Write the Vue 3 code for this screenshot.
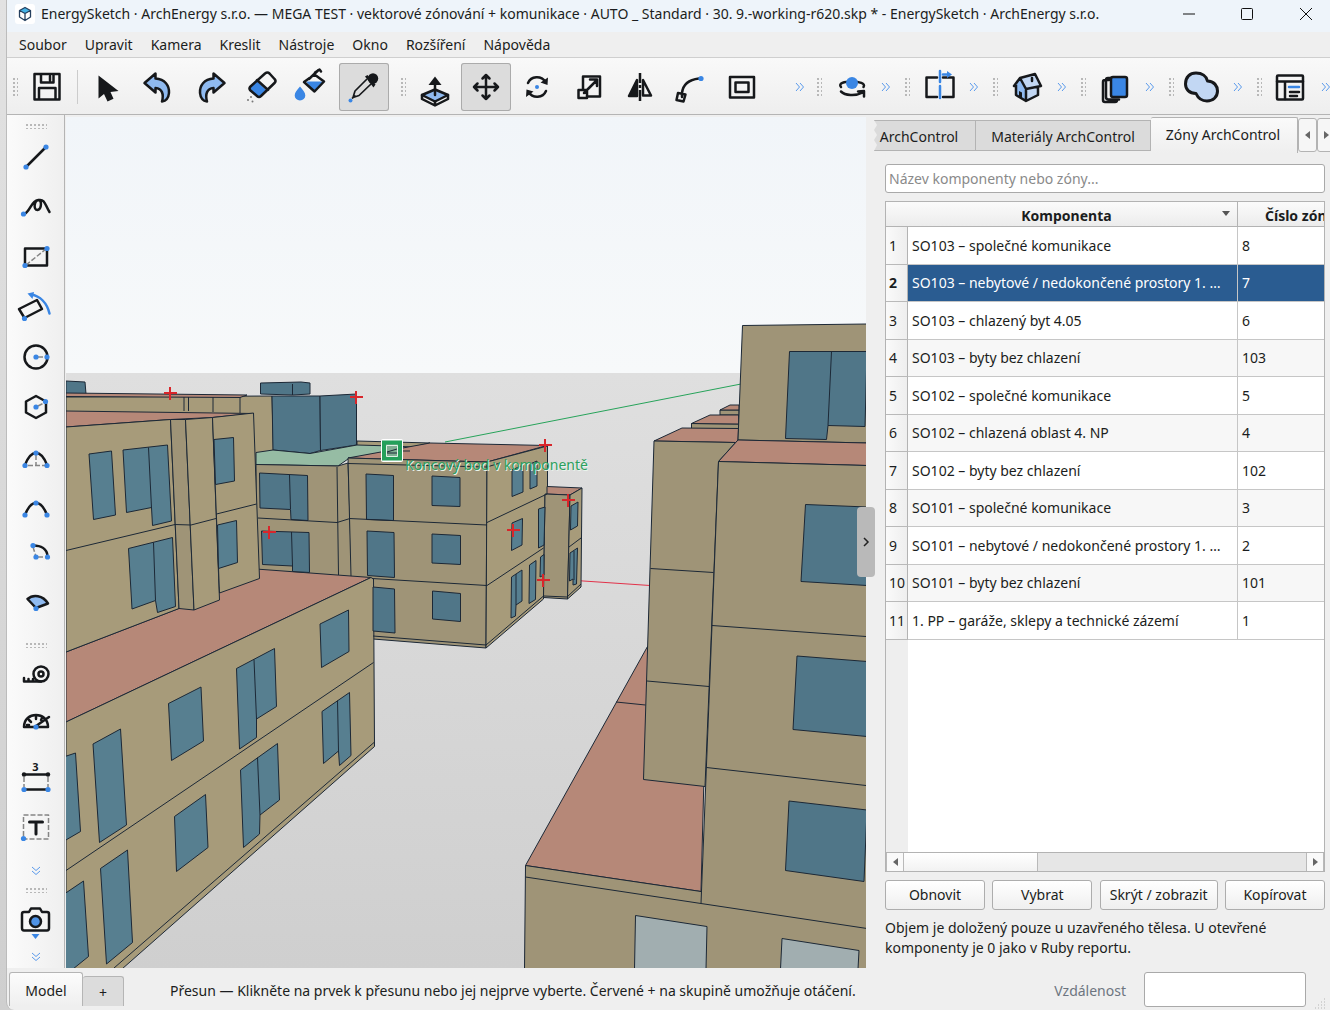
<script setup>
import { ref } from 'vue'

const menus = ['Soubor', 'Upravit', 'Kamera', 'Kreslit', 'Nástroje', 'Okno', 'Rozšíření', 'Nápověda']

const editTools = [
  { id: 'select', label: 'Výběr', box: '84 63 50 48', art: '<path class="solid" d="M98.500 75.500V98.500L104 94L107.500 101.500L113.500 98.800L110.500 92L118.500 91Z"/>' },
  { id: 'undo', label: 'Zpět', box: '135 63 50 48', art: '<path class="ink pale" d="M144.500 83L155.500 73.500V78.500C165 79 169.500 86 169 93C168.500 98 165.500 101 162 101.500C164 94 162 88.500 155.500 88V92.500Z"/>' },
  { id: 'redo', label: 'Znovu', box: '186 63 50 48', art: '<path class="ink pale" d="M224.500 83L213.500 73.500V78.500C204 79 199.500 86 200 93C200.500 98 203.500 101 207 101.500C205 94 207 88.500 213.500 88V92.500Z"/>' },
  { id: 'erase', label: 'Guma', box: '237 63 50 48', art: '<path class="blue" d="M256 80L267 91L260 97L257 97L249 90V87Z"/><path class="ink" d="M265 73.500Q267.500 71.500 269.500 73.500L274.500 79Q276.500 81 274.500 83L261 96Q259 98 257 96L250.500 90.500Q248.500 88.500 250.500 86.500ZM257 80L268 90"/><g class="gray"><circle cx="251" cy="97" r="1"/><circle cx="248" cy="100" r="1"/><circle cx="252.500" cy="101.500" r="1"/></g>' },
  { id: 'paint', label: 'Plechovka', box: '288 63 50 48', art: '<path class="blue" d="M306 81.500H323L314 91Z"/><path class="ink" d="M304 82L314.500 74.500L324 81.500L314.500 91.500ZM309 79L318.500 70M315 72.500L319.500 69.500L321 71.500"/><path class="blue" d="M300 86.500C303 90 305.300 92.500 305.300 95.500A5.300 5 0 0 1 294.700 95.500C294.700 92.500 297 90 300 86.500Z"/>' },
  { id: 'pick', label: 'Kapátko', box: '339 63 50 48', pressed: true, art: '<circle class="solid" cx="373" cy="78.500" r="5.200"/><path class="solid" d="M365 76.500L367.500 75L375.500 84.500L373.500 87.500Z"/><path class="thin" d="M366.500 79.500L355 91L353 97.500L359 95.500L371 84M352.500 98L355 96"/><circle class="blue" cx="350.500" cy="100.500" r="2"/>' },
]

const modifyTools = [
  { id: 'push', label: 'Vytažení', box: '410 63 50 48', art: '<path class="ink pale" d="M435 89.500L448 95L435 101.500L422 95Z"/><path class="ink" d="M422 95V99L435 105.500L448 99V95M435 101.500V105"/><path class="ink" d="M435 95V83"/><path class="solid" d="M435 76.500L441.500 85H428.500Z"/>' },
  { id: 'move', label: 'Přesun', box: '461 63 50 48', pressed: true, art: '<path class="ink" d="M486 75V99M474 87H498M482.500 78.500L486 75L489.500 78.500M482.500 95.500L486 99L489.500 95.500M477.500 83.500L474 87L477.500 90.500M494.500 83.500L498 87L494.500 90.500"/>' },
  { id: 'rotate', label: 'Otočení', box: '512 63 50 48', art: '<path class="ink" d="M528 83C531 76 541 75 545.500 82M546 91C543 98 533 99 528.500 92"/><path class="solid" d="M548 77.500L547.500 85L540.500 82.500ZM526 97L526.500 89.500L533.500 91.500Z"/><circle class="blue" cx="537" cy="87" r="2"/>' },
  { id: 'scale', label: 'Měřítko', box: '563 63 50 48', art: '<path class="ink" d="M583 89V76.500H600V96.500H587M578.500 90H587V98H578.500ZM584 93L596.500 80.500M590 79.500H597V86"/>' },
  { id: 'flip', label: 'Zrcadlení', box: '614 63 50 48', art: '<path class="ink solid" d="M637 80V96H629Z"/><path class="ink" d="M643 80V95.500H651Z"/><path class="line" d="M640 73V83M640 85V88M640 90V101"/>' },
  { id: 'follow', label: 'Následovat', box: '665 63 50 48', art: '<path class="ink" d="M682 93C683 84 690 79.500 699 78.500M678 93L685.500 94.500L683.500 101.500L676.500 100ZM682 92.500V97"/><circle class="blue" cx="701" cy="78.500" r="2.600"/>' },
  { id: 'offset', label: 'Odsazení', box: '716 63 50 48', art: '<path class="ink" d="M730 77H754V97.500H730ZM735.500 82.500H748.500V92H735.500Z"/>' },
]

const tails = [
  { id: 'orbit', label: 'Orbit', box: '826 63 50 48', art: '<path class="ink" d="M841 87C838 83.500 844 81.500 852 81.500C859 81.500 866 83.500 863.500 87M841 91.500C845 95.500 855 96.500 863 92.500M858 91.500L864 91V96.500"/><circle class="blue" cx="852" cy="83" r="6"/>' },
  { id: 'section', label: 'Řez', box: '914 63 50 48', art: '<path class="ink" d="M937 77.500H926.500V97H937M943 77.500H953.500V97H943"/><path class="bluel" d="M940 71V82M940 86V98M943 74.500H948"/><path class="blue" d="M947 71L952 74.500L947 78Z"/>' },
  { id: 'views', label: 'Pohledy', box: '1002 63 50 48', art: '<path class="pale" d="M1016 84L1020 78L1026 87V101L1016 95Z"/><path class="light" d="M1020 78L1035 74L1041 86L1026 88ZM1026 88L1038 86V95L1026 101Z"/><path class="ink" d="M1014 86L1020 78L1035 74L1041 86L1026 89L1020 78M1016 85V95L1026 101L1038 95V87M1026 90V100M1032 78V81"/><path class="solid" d="M1019 91L1022 92.500V99L1019 97Z"/>' },
  { id: 'layers', label: 'Vrstvy', box: '1090 63 50 48', art: '<path class="ink" d="M1109 80H1105Q1103 80 1103 82V100Q1103 102 1105 102H1115Q1117 102 1117 100M1111 78H1108Q1106 78 1106 80V97Q1106 99.500 1108.500 99.500H1119"/><rect class="ink blue" x="1111" y="77" width="16" height="20" rx="2"/>' },
  { id: 'union', label: 'Sjednocení', box: '1179 63 50 48', art: '<path class="ink thick light" d="M1197 73C1203 73 1207.500 76 1208.500 81C1215 81 1218.500 86 1218.500 91C1218.500 97 1214 101 1208 101C1203 101 1199 98 1197 93.500C1190 93.500 1186.500 89 1186.500 84C1186.500 77 1191 73 1197 73Z"/>' },
  { id: 'panel', label: 'Panely', box: '1266 63 50 48', art: '<rect class="ink" x="1277" y="75.500" width="26" height="24" rx="1"/><path class="ink" d="M1277 81.500H1303M1285 82V99M1290 92H1299M1290 96H1297"/><path class="bluel" d="M1289 87H1299"/>' },
]

const drawTools = [
  { id: 'line', label: 'Čára', box: '7 132 58 50', art: '<path class="ink" d="M26 167L46 147"/><g class="blue"><circle cx="26" cy="167" r="2.600"/><circle cx="46" cy="147" r="2.600"/></g>' },
  { id: 'free', label: 'Od ruky', box: '7 182 58 50', art: '<path class="ink" d="M24 214C30 212 31 201 38 200C42 199 42 209 37.500 210C33 210 34 200 39 200C45 199 45 205 49.500 212"/><circle class="blue" cx="23.500" cy="214" r="2.600"/>' },
  { id: 'rect', label: 'Obdélník', box: '7 232 58 50', art: '<rect class="ink" x="25" y="248.500" width="22" height="17"/><path class="dash" d="M26 265L46 249"/><g class="blue"><circle cx="25" cy="265.500" r="2.600"/><circle cx="47" cy="248.500" r="2.600"/></g>' },
  { id: 'rotrect', label: 'Otočený obdélník', box: '7 282 58 50', art: '<path class="ink" d="M19 309L37 300L42 309L24.500 318Z"/><path class="bluel" d="M31 294.500C40 296 47 303 49.500 313.500"/><path class="blue" d="M27.500 293.500L34 292L32.500 299Z"/><circle class="blue" cx="24.500" cy="318.500" r="2.600"/>' },
  { id: 'circle', label: 'Kružnice', box: '7 332 58 50', art: '<circle class="ink" cx="36" cy="357" r="11.500"/><path class="dash" d="M38 357H46"/><g class="blue"><circle cx="36" cy="357" r="2.600"/><circle cx="47" cy="357" r="2.600"/></g>' },
  { id: 'polygon', label: 'Mnohoúhelník', box: '7 382 58 50', art: '<path class="ink" d="M36 396L46 401.500V412.500L36 418L26 412.500V401.500Z"/><path class="dash" d="M38 406L44 403"/><g class="blue"><circle cx="36" cy="407" r="2.600"/><circle cx="45.500" cy="401.500" r="2.600"/></g>' },
  { id: 'arc2', label: 'Oblouk', box: '7 432 58 50', art: '<path class="ink" d="M25 465C31 449 41 449 47 465"/><path class="dash" d="M36 455V465M28 465.500H45"/><g class="blue"><circle cx="25" cy="465.500" r="2.600"/><circle cx="47" cy="465.500" r="2.600"/><circle cx="36" cy="453" r="2.600"/></g>' },
  { id: 'arc3', label: 'Oblouk třemi body', box: '7 482 58 50', art: '<path class="ink" d="M25 515C31 499 41 499 47 515"/><g class="blue"><circle cx="25" cy="515" r="2.600"/><circle cx="47" cy="515" r="2.600"/><circle cx="36" cy="503" r="2.600"/></g>' },
  { id: 'arc', label: 'Oblouk ze středu', box: '7 532 58 50', art: '<path class="ink" d="M33 545.500C41 545.500 47 549 47.500 556"/><path class="dash" d="M33 547L35.500 555M38 557H45"/><g class="blue"><circle cx="33" cy="545.500" r="2.600"/><circle cx="36" cy="557" r="2.600"/><circle cx="47.500" cy="557" r="2.600"/></g>' },
  { id: 'pie', label: 'Výseč', box: '7 582 58 50', art: '<path class="ink pale" d="M27.500 599C33 594 43 595 48 603.500L36 608Z"/><circle class="blue" cx="36" cy="608.500" r="2.600"/>' },
]

const measureTools = [
  { id: 'tape', label: 'Metr', box: '7 652 58 50', art: '<circle class="ink" cx="41" cy="674" r="7.500"/><circle class="ink" cx="41" cy="674" r="2.500"/><path class="ink" d="M41 681.500H24V678M28.500 681V679M33 681V679"/>' },
  { id: 'protractor', label: 'Úhloměr', box: '7 702 58 50', art: '<path class="ink" d="M24 727C24 711 48 711 48 727ZM36 726L49 717M29 720L31 722M36 716V719M42 718L41 720M27 725H29"/><circle class="blue" cx="36" cy="727" r="2.600"/>' },
  { id: 'dimension', label: 'Kóta', box: '7 752 58 50', art: '<text x="35.500" y="770.500" text-anchor="middle" font-size="11" font-weight="700" fill="#16181b">3</text><path class="ink" d="M24 774.500H48M24 789.500H48"/><path class="dash" d="M24 777V787M48 777V787"/><circle class="solid" cx="24" cy="774.500" r="2.200"/><circle class="solid" cx="48" cy="774.500" r="2.200"/><g class="blue"><circle cx="24" cy="789.500" r="2.600"/><circle cx="48" cy="789.500" r="2.600"/></g>' },
  { id: 'text', label: 'Text', box: '7 802 58 50', art: '<rect class="dash" x="23.500" y="815" width="25" height="24"/><path class="ink thick" d="M29.500 822H42.500M36 822V834"/><circle class="blue" cx="23.500" cy="838.500" r="2.600"/>' },
]

const cameraTool = { id: 'camera', label: 'Kamera', box: '7 895 58 50', art: '<path class="ink" d="M24 911H29L31 907.500H40L42 911H47Q49 911 49 913V927Q49 929.500 47 929.500H24Q22 929.500 22 927V913Q22 911 24 911Z"/><circle class="ink mid" cx="35.500" cy="920.500" r="5.500"/><path class="blue" d="M31.500 933H39.500L35.500 938Z"/>' }

const rows = [
  ['SO103 – společné komunikace', 8],
  ['SO103 – nebytové / nedokončené prostory 1. NP', 7],
  ['SO103 – chlazený byt 4.05', 6],
  ['SO103 – byty bez chlazení', 103],
  ['SO102 – společné komunikace', 5],
  ['SO102 – chlazená oblast 4. NP', 4],
  ['SO102 – byty bez chlazení', 102],
  ['SO101 – společné komunikace', 3],
  ['SO101 – nebytové / nedokončené prostory 1. NP', 2],
  ['SO101 – byty bez chlazení', 101],
  ['1. PP – garáže, sklepy a technické zázemí', 1],
]
const selected = ref(1)
const filter = ref('')
const distance = ref('')
const actions = ['Obnovit', 'Vybrat', 'Skrýt / zobrazit', 'Kopírovat']

// Model faces, back to front: [fill class, polygon points]
const faces = [
  ['gd', '66,381 85,382 86,394 66,394'],
  ['w1', '66,397 272,396 274,475 240,475 66,430'],
  ['roof', '66,393 247,395 240,397.500 66,396.500'],
  ['gd', '272,396 320,396 320.500,450.500 310,453.500 273,450'],
  ['gd', '320,396 356.500,394 356.500,445 320.500,450.500'],
  ['gd', '260.500,383 301,382 310,383 310,394 292.500,395 260.500,394'],
  ['w1', '357,441 430,443 400,450 357,446'],
  ['green', '256,452.500 273,450 310,453.500 357,445 392,446 412,447 348,459 338,466 256,464.500'],
  ['w2', '256,464.500 338,466 348,463 352,578 256,571'],
  ['roof', '348,458 430,443 547,445.500 487,462'],
  ['w2', '348,458 487,462 486,648 373,639 351,576'],
  ['w1', '487,462 547.500,446 547.500,494 545,495 543.500,599 486,648'],
  ['roof', '547,486.500 582,488 570,495 547,494'],
  ['w2', '545,494 570,495 567.500,599 543.500,597.500'],
  ['w1', '570,495 582,488 581,587 567.500,599'],
  ['roof', '66,652 180,608 256,569 371,577.500 66,722'],
  ['w1', '66,722 371,577.500 373.500,579 374.500,746.500 122,969 66,969'],
  ['roof', '66,411 253.500,413.500 212,417.500 170.500,419.500 66,427'],
  ['w1', '66,427 170.500,419.500 179,608.500 66,652'],
  ['w2', '170.500,419.500 185.500,419.500 194,610 179,608.500'],
  ['w1', '185.500,419.500 212.500,417.500 219.500,600 194,610'],
  ['w1', '212.500,417.500 253.500,413 259.500,578.500 219.500,593'],
  ['w2', '720,410 739,410 739,415 720,415'],
  ['roof', '720,410 730,405 739,405 739,410'],
  ['w2', '691.500,423.500 738.500,424 738.500,429 691.500,429'],
  ['roof', '691.500,423.500 710,415 738.500,415 738.500,424'],
  ['roof', '654,441 682,428 738.500,428.500 738,440 735.500,442.500'],
  ['w2', '742.500,325.500 867,324 867,443 738,440'],
  ['roof', '525.500,865.500 647.500,646.500 706,700 701,891.500'],
  ['w2', '654,441 735.500,442.500 718.500,461.500 705,786.500 643.500,779.500 647.500,650'],
  ['roof', '718.500,461.500 738,440 867,443 867,465.500'],
  ['w2', '525.500,865.500 701,891.500 867,916 867,969 524.500,969'],
  ['w2', '718.500,461.500 867,465.500 867,928.500 701,903.500'],
]

const glazing = [
  ['gd', '366,474 393.500,475.500 393.500,520.500 366.500,519.500'],
  ['gd', '432,476 460,477.500 460,506.500 432,505.500'],
  ['gd', '367,531 394,532.500 394.500,577.500 367.500,575.500'],
  ['gd', '432,534 460.500,535.500 460.500,564.500 432,563'],
  ['gd', '373,587 394.500,589 395,633 373,631'],
  ['gd', '432.500,591 460.500,593.500 460.500,621.500 432.500,619'],
  ['g', '512,470 523,465 523,492 512,496.500'],
  ['g', '530,464 537,461 537,486 530,489'],
  ['g', '512,523 522.500,518.500 522,545 511.500,550.500'],
  ['g', '538.500,509 545,507 544,545 538.500,548'],
  ['g', '511.500,577 522,570 522,601 516,605 515.500,616 511,618'],
  ['g', '529.500,565 536,560.500 535.500,599.500 529,603.500'],
  ['g', '540.500,557 544,554.500 544,575 540,577'],
  ['g', '571,506 578,502 577.500,526 570.500,530'],
  ['g', '570,553 577.500,548 576.500,584 573,585 573,579 569.500,581'],
  ['gd', '259.500,473 307.500,475.500 308,520.500 291,519.500 290.500,509.500 260,508'],
  ['gd', '261.500,531 309,532.500 309.500,572.500 292.500,571.500 292.500,566 262.500,564.500'],
  ['g', '89,454 111.500,451 115.500,515 93.500,519.500'],
  ['g', '123,450 167.500,445 171.500,521 152.500,525.500 151.500,507.500 126.500,512.500'],
  ['g', '128.500,548.500 172.500,537.500 175.500,606.500 157.500,612.500 155.500,600.500 132,609'],
  ['g', '214,439.500 233.500,437.500 234.500,481 215.500,484.500'],
  ['g', '217.500,525 236.500,520.500 237.500,562.500 218.500,568.500'],
  ['g', '65,756.500 75.500,753 80.500,831.500 65,840.500'],
  ['g', '93,744 120.500,729 126.500,825 99.500,842.500'],
  ['g', '168.500,703.500 201,687 203.500,741 171.500,760.500'],
  ['g', '236.500,668.500 274.500,648.500 276.500,706.500 256.500,719 256.500,737.500 239.500,749'],
  ['g', '320,624 348.500,610 349,651.500 321.500,667.500'],
  ['g', '65,893.500 83.500,881 88.500,956.500 73,969 65,969'],
  ['g', '100.500,868.500 127.500,850 132.500,942.500 106.500,964'],
  ['g', '174.500,816.500 205.500,794.500 208,847.500 176.500,871.500'],
  ['g', '240.500,770 277.500,743.500 279.500,800 260,815 259.500,834 243.500,847.500'],
  ['g', '322,711.500 349.500,692.500 351,755.500 339.500,765.500 338.500,751 323.500,763.500'],
  ['gd', '789.500,351.500 867,351.500 865,426.500 828,425.500 826.500,439.500 785.500,438.500'],
  ['gd', '805.500,504.500 867,507 867,585.500 801,581.500'],
  ['gd', '797,656 867,661.500 867,736.500 793,729.500'],
  ['gd', '789,801 867,810 864,881.500 785.500,870.500'],
  ['haze', '635.500,915.500 707,926.500 706,969 634.500,969'],
  ['haze', '782,938.500 859,950.500 858,969 780.500,969'],
]

const edges = [
  'M184 397V411M188.500 397V411M213 397V412M240 397V413M292.500 384V395',
  'M349 518.500L487 525M372 578.500L487 585.500M348 463.500L487 467M487 467L500 463',
  'M373 636L486 645L543.500 596M487 522.500L547 494M487 585.500L543.500 548',
  'M544 596L567 597L581 584M569 547L581 538M574 551V580M516 574V605',
  'M337 467L338.500 575M258 518L337 522.500L350 518.500M289.500 475L290.500 509M291.500 532L292.500 566',
  'M66 550.500L175 524.500L191 525L216 518.500M216.500 514L256.500 504M148.500 447.500L151.500 508M153.500 542.500L155.500 600.500',
  'M374 742.500L114 968M66 870.500L373.500 662.500M254 659.500L256.500 719M257.500 757.500L260 815M337.500 700.500L338.500 751',
  'M831.500 351.500L828 425.500M650.500 568.500L713.500 572.500M647 681L709 686.500M712 625.500L866 636.500M706.500 767.500L866 785.500',
  'M616 702L645.500 705M525.500 877L701 903.500',
]

const grips = [[170, 393], [356, 397], [545, 445], [568, 500], [513, 530], [543, 580], [269, 532]]
</script>

<template>
  <div class="desk">
    <div class="window">
      <header class="title">
        <svg class="logo" viewBox="0 0 20 20" aria-hidden="true">
          <rect width="20" height="20" rx="3" fill="#fff" />
          <path d="M10 3.500L15.500 6.500L10 9.500L4.500 6.500Z" fill="#45b4e8" />
          <path d="M10 3.500L15.500 6.500V13L10 16.500L4.500 13V6.500ZM4.500 6.500L10 9.500L15.500 6.500M10 9.500V16" fill="none" stroke="#25405f" stroke-width="1.300" stroke-linejoin="round" />
        </svg>
        <h1>EnergySketch · ArchEnergy s.r.o. — MEGA TEST · vektorové zónování + komunikace · AUTO _ Standard · 30. 9.-working-r620.skp * - EnergySketch · ArchEnergy s.r.o.</h1>
        <div class="winctl">
          <button aria-label="Minimalizovat"><svg viewBox="0 0 14 14"><path d="M1 7H13" /></svg></button>
          <button aria-label="Maximalizovat"><svg viewBox="0 0 14 14"><rect x="1.500" y="1.500" width="11" height="11" rx="1" /></svg></button>
          <button aria-label="Zavřít"><svg viewBox="0 0 14 14"><path d="M1 1L13 13M13 1L1 13" /></svg></button>
        </div>
      </header>

      <nav class="menu">
        <button v-for="m in menus" :key="m">{{ m }}</button>
      </nav>

      <div class="tools">
        <div class="group edit">
          <i class="grip"></i>
          <button class="tool" aria-label="Uložit">
            <svg viewBox="22 63 50 48"><path class="ink" d="M34.500 74H59.500V99.500H34.500ZM41 74V82.500H53.500V74M50 76V80.500M39 99V88H55.500V99" /></svg>
          </button>
          <i class="rule"></i>
          <button v-for="t in editTools" :key="t.id" class="tool" :class="{ pressed: t.pressed }" :aria-label="t.label">
            <svg :viewBox="t.box" v-html="t.art"></svg>
          </button>
        </div>
        <div class="group modify">
          <i class="grip"></i>
          <button v-for="t in modifyTools" :key="t.id" class="tool" :class="{ pressed: t.pressed }" :aria-label="t.label">
            <svg :viewBox="t.box" v-html="t.art"></svg>
          </button>
          <button class="more" aria-label="Další nástroje"><svg viewBox="0 0 10 10"><path d="M1 1L4.500 5L1 9M5 1L8.500 5L5 9" /></svg></button>
        </div>
        <div v-for="t in tails" :key="t.id" class="group tail">
          <i class="grip"></i>
          <button class="tool" :aria-label="t.label"><svg :viewBox="t.box" v-html="t.art"></svg></button>
          <button class="more" aria-label="Další nástroje"><svg viewBox="0 0 10 10"><path d="M1 1L4.500 5L1 9M5 1L8.500 5L5 9" /></svg></button>
        </div>
      </div>

      <main class="work">
        <aside class="side">
          <i class="grip flat first"></i>
          <button v-for="t in drawTools" :key="t.id" class="tool" :aria-label="t.label"><svg :viewBox="t.box" v-html="t.art"></svg></button>
          <i class="grip flat second"></i>
          <button v-for="t in measureTools" :key="t.id" class="tool" :aria-label="t.label"><svg :viewBox="t.box" v-html="t.art"></svg></button>
          <button class="more down tall" aria-label="Další nástroje"><svg viewBox="0 0 10 10"><path d="M1 1L5 4.500L9 1M1 5L5 8.500L9 5" /></svg></button>
          <i class="grip flat third"></i>
          <button class="tool" :aria-label="cameraTool.label"><svg :viewBox="cameraTool.box" v-html="cameraTool.art"></svg></button>
          <button class="more down" aria-label="Další nástroje"><svg viewBox="0 0 10 10"><path d="M1 1L5 4.500L9 1M1 5L5 8.500L9 5" /></svg></button>
        </aside>

        <section class="view">
          <svg class="scene" viewBox="66 117 800 851" preserveAspectRatio="xMaxYMid slice" role="img" aria-label="3D model">
            <defs>
              <linearGradient id="sky" x1="0" y1="0" x2="0" y2="1"><stop offset="0" stop-color="#f1f5f9" /><stop offset="1" stop-color="#f7f9fa" /></linearGradient>
              <linearGradient id="ground" x1="0" y1="0" x2="0" y2="1"><stop offset="0" stop-color="#dfdfdf" /><stop offset="1" stop-color="#cfcfcf" /></linearGradient>
            </defs>
            <rect x="66" y="117" width="800" height="256" fill="url(#sky)" />
            <rect x="66" y="373" width="800" height="595" fill="url(#ground)" />
            <path d="M445 442L741 384" stroke="#27a35a" fill="none" />
            <path d="M576 580.500L650 585.500" stroke="#e2324a" fill="none" />
            <g class="solids">
              <polygon v-for="(f, i) in faces" :key="i" :class="f[0]" :points="f[1]" />
              <polygon v-for="(f, i) in glazing" :key="'g' + i" :class="f[0]" :points="f[1]" />
              <path v-for="e in edges" :key="e" :d="e" />
            </g>
            <path v-for="(g, i) in grips" :key="i" class="cross" :d="`M${g[0] - 6} ${g[1]}h13M${g[0]} ${g[1] - 6}v13`" />
            <rect x="381" y="439" width="22" height="23" rx="2" fill="#fff" />
            <path d="M384 442.500H400V458.500H384Z" fill="#7fae92" stroke="#23a05a" stroke-width="4" />
            <path d="M386.500 445.500H397.500V456.500H386.500Z" fill="none" stroke="#dff0e5" />
            <path d="M387 452L397 449M387 453H397M403 451H410" stroke="#1c2a38" fill="none" />
            <g class="hint"><text class="halo" x="406" y="471">Koncový bod v komponentě</text><text x="405" y="470">Koncový bod v komponentě</text></g>
          </svg>
          <button class="fold" aria-label="Skrýt panel"><svg viewBox="0 0 10 10"><path d="M3 1L7 5L3 9" /></svg></button>
        </section>

        <aside class="panel">
          <div class="tabs" role="tablist">
            <button class="tab cut" role="tab">ArchControl</button>
            <button class="tab between" role="tab">Materiály ArchControl</button>
            <button class="tab on" role="tab" aria-selected="true">Zóny ArchControl</button>
            <button class="scroll" aria-label="Předchozí"><i class="tri left"></i></button>
            <button class="scroll" aria-label="Další"><i class="tri right"></i></button>
          </div>
          <input v-model="filter" class="search" type="text" placeholder="Název komponenty nebo zóny..." aria-label="Název komponenty nebo zóny" />
          <div class="gridbox">
            <table>
              <colgroup><col class="c0" /><col /><col class="c2" /></colgroup>
              <thead>
                <tr><th class="corner"></th><th class="comp"><span>Komponenta</span><i class="tri sort"></i></th><th class="zone">Číslo zóny</th></tr>
              </thead>
              <tbody>
                <tr v-for="(r, i) in rows" :key="i" :class="{ sel: i === selected }" @click="selected = i">
                  <th scope="row">{{ i + 1 }}</th><td>{{ r[0] }}</td><td>{{ r[1] }}</td>
                </tr>
              </tbody>
            </table>
            <div class="hbar">
              <button aria-label="Posunout vlevo"><i class="tri left"></i></button>
              <div class="track"><div class="thumb"></div></div>
              <button aria-label="Posunout vpravo"><i class="tri right"></i></button>
            </div>
          </div>
          <div class="actions">
            <button v-for="a in actions" :key="a">{{ a }}</button>
          </div>
          <p>Objem je doložený pouze u uzavřeného tělesa. U otevřené komponenty je 0 jako v Ruby reportu.</p>
        </aside>
      </main>

      <footer class="status">
        <div class="pages">
          <button class="page on">Model</button>
          <button class="page add" aria-label="Přidat scénu">+</button>
        </div>
        <span class="msg">Přesun — Klikněte na prvek k přesunu nebo jej nejprve vyberte. Červené + na skupině umožňuje otáčení.</span>
        <label for="dist">Vzdálenost</label>
        <input id="dist" v-model="distance" type="text" />
        <svg class="size" viewBox="0 0 12 12" aria-hidden="true"><path d="M9 1h1M6 4h1M9 4h1M3 7h1M6 7h1M9 7h1M0 10h1M3 10h1M6 10h1M9 10h1" stroke="#b5b5b5" /></svg>
      </footer>
    </div>
  </div>
</template>

<style>
body { margin: 0; background: #d8d8d8; }
.ink, .thin, .line, .dash, .bluel { fill: none; stroke: #16181b; stroke-width: 2.500; stroke-linejoin: round; stroke-linecap: round; }
.thin { stroke-width: 1.700; }
.line { stroke-linecap: butt; }
.thick { stroke-width: 3; }
.dash { stroke: #858585; stroke-width: 1.500; stroke-dasharray: 5 2; stroke-linecap: butt; }
.bluel { stroke: #3a86e4; }
.solid { fill: #16181b; }
.blue { fill: #3a86e4; }
.pale { fill: #8fbaf0; }
.mid { fill: #4f93e6; }
.light { fill: #c2d7f3; }
.gray { fill: #777; }
</style>

<style scoped>
.desk { min-height: 100vh; display: flex; padding-left: 6px; box-sizing: border-box; background: linear-gradient(#e2e2e2, #cfcfcf); font: 14px/20px "Noto Sans", "Open Sans", sans-serif; color: #1b1d20; }
.window { flex: 1; min-width: 0; display: flex; flex-direction: column; background: #efefef; border-left: 1px solid #bcbcbc; border-radius: 0 0 0 8px; box-sizing: border-box; }
button { font: inherit; color: inherit; margin: 0; padding: 0; border: 0; background: none; }
input { font: inherit; color: inherit; box-sizing: border-box; border: 1px solid #a9a9a9; border-radius: 3px; background: #fff; outline: none; }

.title { display: flex; align-items: center; height: 32px; background: #eef4fa; padding: 0 0 4px 8px; box-sizing: border-box; }
.logo { flex: none; width: 20px; height: 20px; }
h1 { flex: 1; min-width: 0; margin: 0 0 0 6px; font-size: 14px; font-weight: 400; white-space: nowrap; overflow: hidden; text-overflow: ellipsis; }
.winctl { display: flex; flex: none; }
.winctl button { width: 58px; height: 26px; display: grid; place-items: center; }
.winctl button:last-child { width: 54px; padding-left: 6px; box-sizing: border-box; }
.winctl svg { width: 14px; height: 14px; fill: none; stroke: #111; }

.menu { display: flex; height: 25px; padding-left: 3px; border-bottom: 1px solid #cfcfcf; }
.menu button { padding: 0 9px; white-space: nowrap; }

.tools { display: flex; height: 56px; overflow: hidden; background: linear-gradient(#f9f9f9, #eee); border-bottom: 1px solid #b4b4b4; }
.group { display: flex; align-items: center; flex: none; box-sizing: border-box; padding-top: 2px; }
.edit { width: 388px; }
.modify { flex: 1; min-width: 0; }
.tail { width: 88px; }
.tail:last-child { width: 79px; }
.grip { flex: none; width: 6px; height: 20px; margin: 0 4px 0 5px; background: radial-gradient(circle, #b8b8b8 0 1px, transparent 1px) 0 0 / 4px 4px; }
.rule { width: 1px; height: 34px; background: #ccc; margin: 0 6px 0 5px; flex: none; }
.tool { flex: none; width: 50px; height: 48px; box-sizing: border-box; }
.tools .tool + .tool { margin-left: 1px; }
.tool svg { display: block; width: 50px; height: 48px; }
.tool.pressed { background: #dcdcdc; box-shadow: inset 0 0 0 1px #ababab; border-radius: 3px; }
.more { flex: none; width: 16px; height: 48px; display: grid; place-items: center; }
.more svg { width: 10px; height: 10px; fill: none; stroke: #5a9aec; }
.modify .more { margin-left: auto; margin-right: 3px; }
.tail .more { margin-left: 4px; width: 12px; }

.work { flex: 1; display: flex; min-height: 0; }
.side { flex: none; width: 58px; box-sizing: border-box; border-right: 1px solid #b4b4b4; display: flex; flex-direction: column; align-items: center; background: linear-gradient(90deg, #fbfbfb, #efefef); }
.side .tool, .side .tool svg { width: 58px; height: 50px; }
.grip.flat { width: 22px; height: 6px; margin: 0; background-position: 0 0; }
.grip.first { margin: 8px 0 3px; }
.grip.second { margin: 10px 0 4px; }
.grip.third { margin: 3px 0; }
.more.down { width: 58px; height: 22px; }
.more.tall { height: 32px; padding-top: 6px; }

.view { flex: 1; min-width: 0; position: relative; display: flex; margin: 2px 0 0 1px; }
.scene { flex: 1; width: 100%; min-width: 0; display: block; }
.solids { stroke: #1c2836; stroke-width: 1; stroke-linejoin: round; fill: none; }
.w1 { fill: #a79b7a; }
.w2 { fill: #9f9477; }
.roof { fill: #b68878; }
.g { fill: #577f90; }
.gd { fill: #507688; }
.green { fill: #96bca4; }
.haze { fill: #a1aeb0; }
.cross { stroke: #d8262b; stroke-width: 2; fill: none; }
.hint { font-size: 14px; fill: #2c9f5c; }
.halo { fill: #e9f4ec; }
.fold { position: absolute; right: -9px; top: 390px; width: 18px; height: 70px; border-radius: 4px; background: #b9b9b9; display: grid; place-items: center; z-index: 1; }
.fold svg { width: 10px; height: 10px; fill: none; stroke: #222; stroke-width: 1.500; }

.panel { flex: none; width: 464px; box-sizing: border-box; padding: 2px 5px 10px 19px; display: flex; flex-direction: column; background: #efefef; }
.tabs { display: flex; height: 36px; margin: 0 -5px 0 -12px; overflow: hidden; align-items: flex-start; flex: none; }
.tab { flex: none; box-sizing: border-box; height: 31px; margin-top: 3px; background: #dbdbdb; border: 1px solid #b3b3b3; white-space: nowrap; padding-top: 2px; }
.cut { width: 103px; border-left: 0; padding-right: 10px; clip-path: polygon(1px 0, 4px 5px, 1px 10px, 4px 15px, 1px 20px, 4px 25px, 1px 31px, 100% 31px, 100% 0); }
.between { width: 175px; border-left: 0; }
.on.tab { width: 147px; height: 36px; margin-top: 0; background: linear-gradient(#fafafa, #efefef); border-bottom: 0; border-left: 0; padding: 0 2px 1px 0; border-radius: 2px 2px 0 0; }
.scroll { flex: none; width: 19px; height: 34px; margin-top: 1px; box-sizing: border-box; border: 1px solid #b3b3b3; border-radius: 3px; background: #f6f6f6; display: grid; place-items: center; }
.tri { display: block; width: 0; height: 0; border: 4px solid transparent; }
.tri.left { border-right: 5px solid #666; border-left: 0; }
.tri.right { border-left: 5px solid #666; border-right: 0; }
.search { flex: none; height: 29px; margin-top: 11px; padding: 0 3px; width: 100%; }
.search::placeholder { color: #8a8a8a; opacity: 1; }

.gridbox { flex: 1; margin-top: 8px; display: flex; flex-direction: column; border: 1px solid #b3b3b3; background: linear-gradient(90deg, #eee 22px, #fff 22px); overflow: hidden; }
table { width: 100%; table-layout: fixed; border-collapse: separate; border-spacing: 0; }
.c0 { width: 22px; }
.c2 { width: 86px; }
th, td { padding: 0; box-sizing: border-box; white-space: nowrap; overflow: hidden; }
thead th { height: 25px; padding-top: 3px; font-weight: 700; background: linear-gradient(#fbfbfb, #ececec); border-bottom: 1px solid #b3b3b3; }
.comp { position: relative; border-right: 1px solid #b3b3b3; padding-right: 12px; }
.comp .sort { position: absolute; right: 7px; top: 9px; border-top: 5px solid #555; border-bottom: 0; }
.zone { text-align: left; padding-left: 27px; }
tbody tr { height: 38px; }
tbody tr:nth-child(even) { height: 37px; }
tbody tr:nth-child(even) td { background: #f7f7f7; }
tbody th { font-weight: 400; text-align: left; padding-left: 3px; background: linear-gradient(90deg, #fafafa, #eee); border-right: 1px solid #b3b3b3; border-bottom: 1px solid #b9b9b9; }
tbody td { padding: 0 10px 0 4px; text-overflow: ellipsis; border-right: 1px solid #c6c6c6; border-bottom: 1px solid #c6c6c6; }
tbody td:last-child { border-right: 0; }
tbody tr.sel td { background: #2a5c91; color: #fff; }
tbody tr.sel th { font-weight: 700; }
.hbar { margin-top: auto; height: 18px; display: flex; border-top: 1px solid #b3b3b3; background: #e6e6e6; }
.hbar button { flex: none; width: 18px; background: #f9f9f9; border: 1px solid #b9b9b9; border-width: 0 1px; display: grid; place-items: center; }
.track { flex: 1; display: flex; }
.thumb { width: 33%; background: linear-gradient(#fff, #f2f2f2); border-right: 1px solid #b9b9b9; }

.actions { flex: none; display: flex; justify-content: space-between; margin-top: 8px; }
.actions button { width: 100px; height: 30px; box-sizing: border-box; border: 1px solid #adadad; border-radius: 3px; background: linear-gradient(#fff, #efefef); white-space: nowrap; }
.actions button:nth-child(3) { width: 118px; }
p { margin: 8px 0 0; flex: none; width: 400px; }

.status { flex: none; display: flex; align-items: center; height: 42px; padding-right: 3px; }
.pages { display: flex; align-self: flex-start; padding: 4px 0 0 2px; align-items: flex-end; height: 38px; box-sizing: border-box; }
.page { box-sizing: border-box; border: 1px solid #b5b5b5; border-bottom: 0; height: 34px; width: 74px; background: linear-gradient(#fcfcfc, #efefef); border-radius: 3px 3px 0 0; padding-top: 2px; }
.page.add { width: 41px; height: 30px; background: #dcdcdc; border-left: 0; }
.msg { margin-left: 46px; padding-top: 3px; flex: 1; min-width: 0; white-space: nowrap; overflow: hidden; text-overflow: ellipsis; }
.status label { color: #6d7580; margin-right: 18px; padding-top: 3px; }
.status input { width: 162px; height: 35px; padding: 0 6px; }
.size { width: 12px; height: 12px; margin-left: 9px; align-self: flex-end; }
</style>
